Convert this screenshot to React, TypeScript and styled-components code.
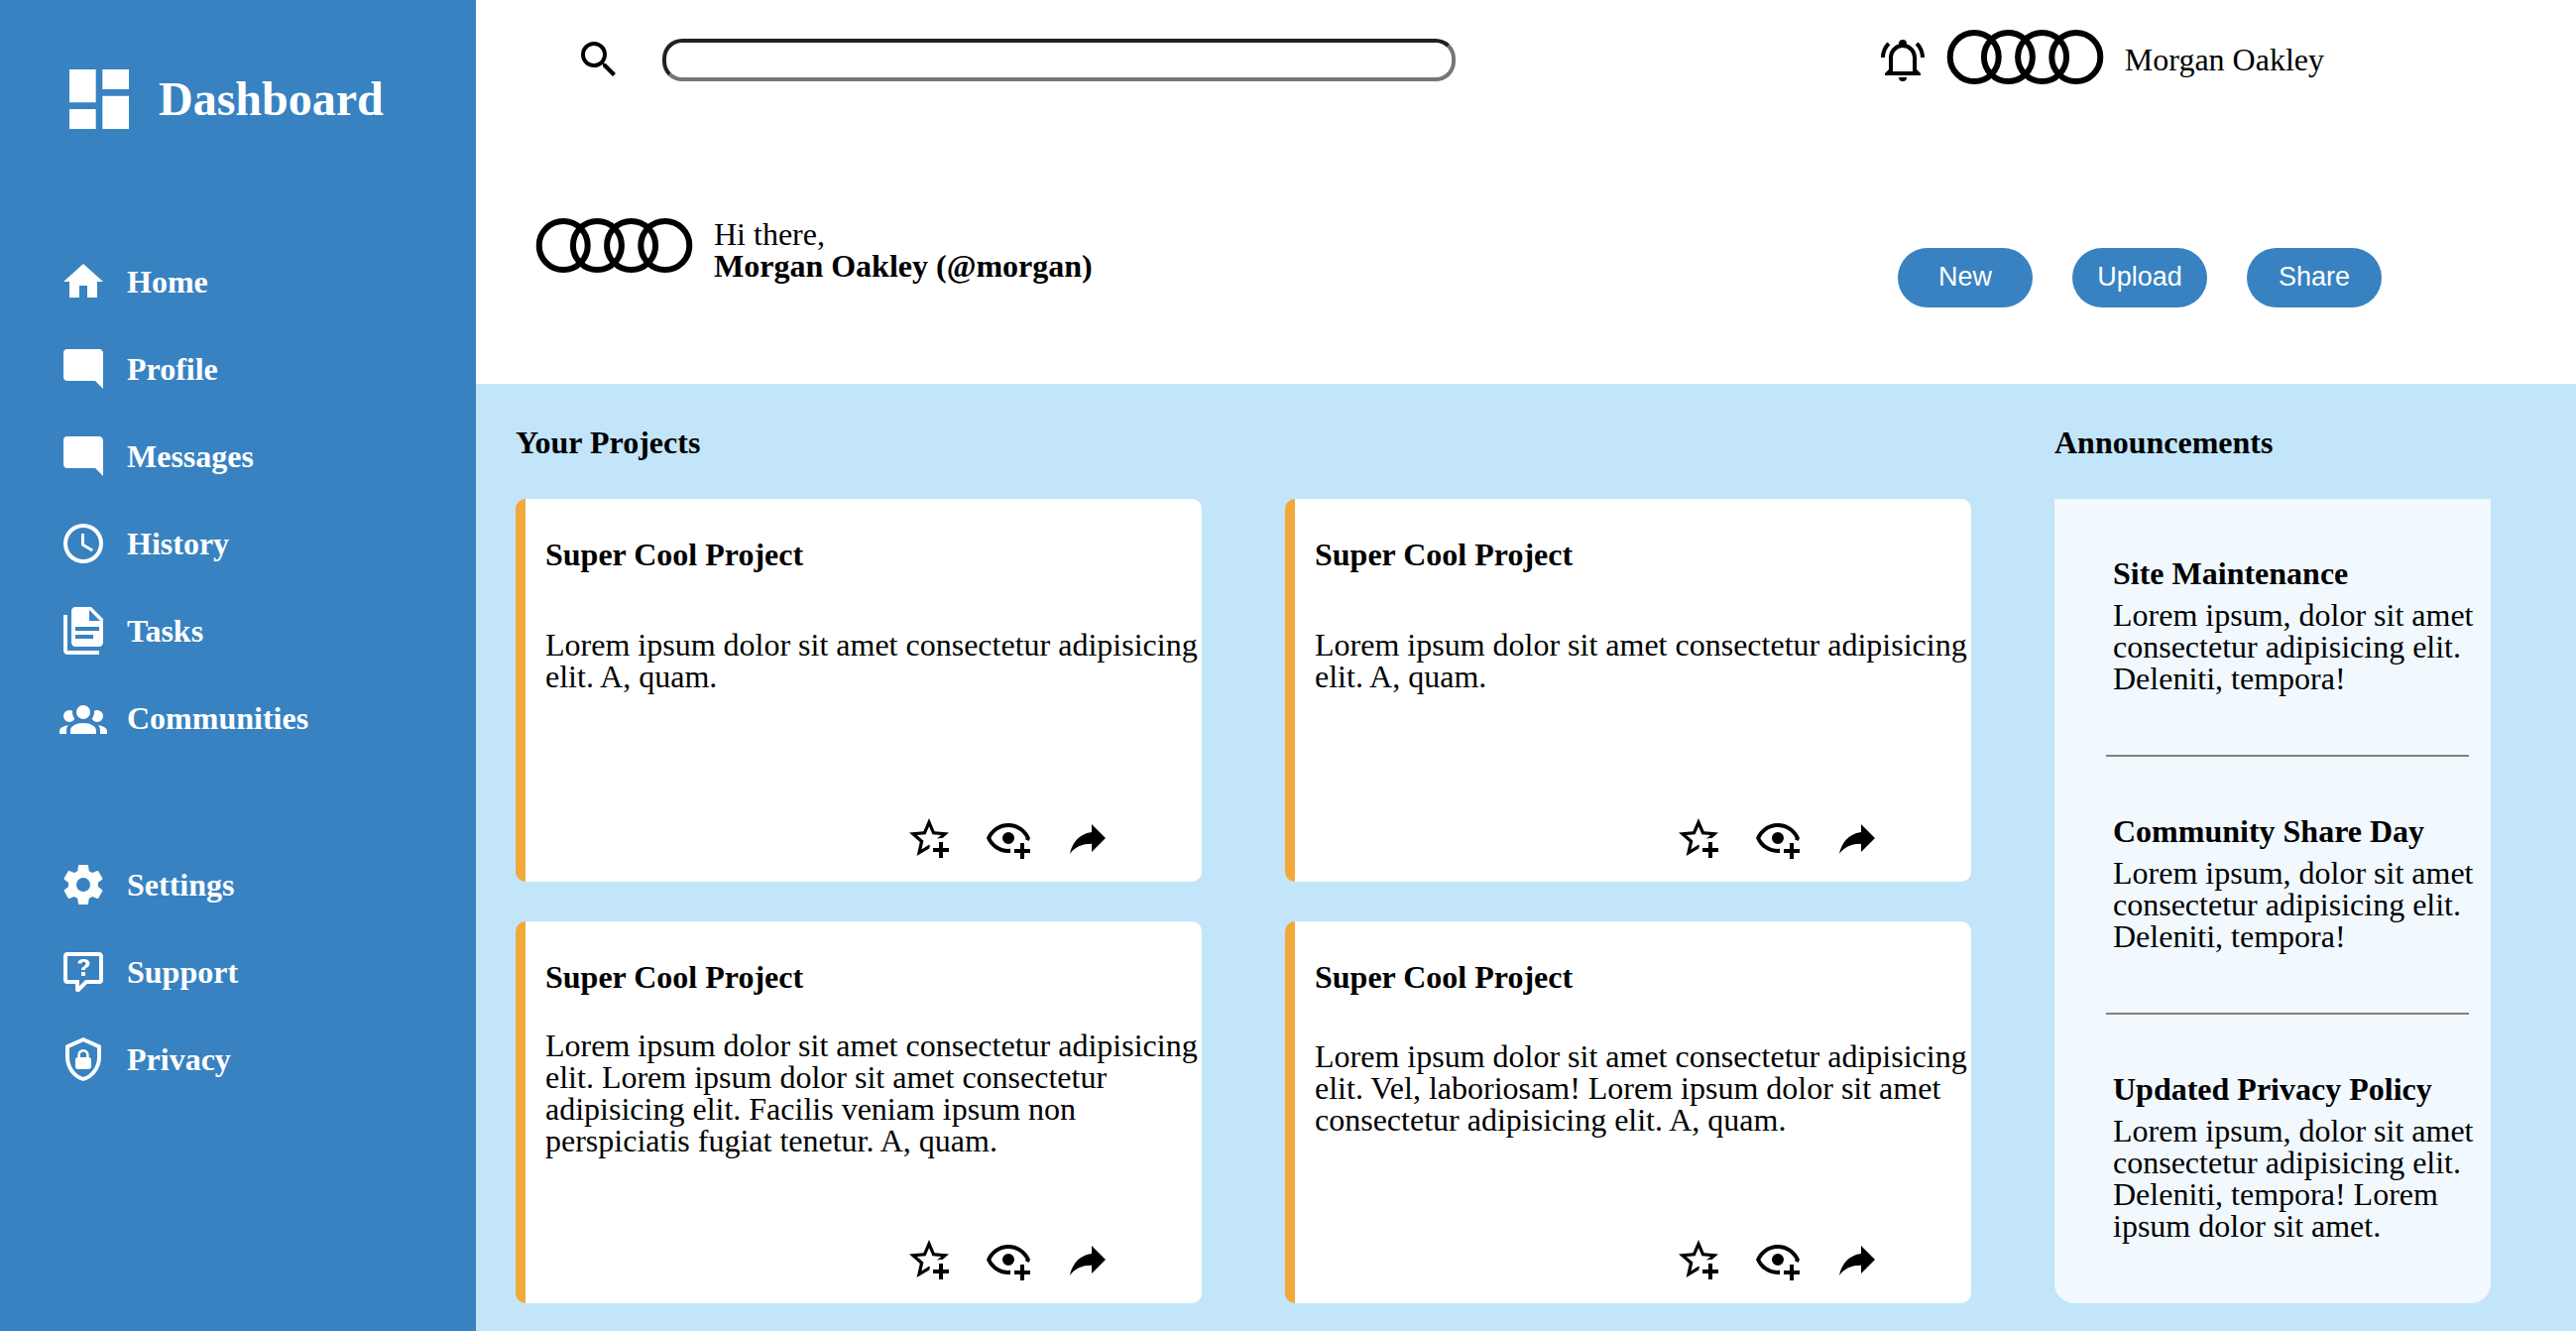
import React from "react";
import styled, { createGlobalStyle } from "styled-components";

const colors = {
  blue: "#3882c1",
  sky: "#c2e5f9",
  panel: "#f1f8fe",
  orange: "#f1a93b",
  rule: "#808080",
};

const GlobalStyle = createGlobalStyle`
  *, *::before, *::after { box-sizing: border-box; }
  body {
    margin: 0;
    background: #fff;
    color: #000;
    font-family: "Liberation Serif", "Times New Roman", serif;
    font-size: 32px;
    line-height: 32px;
  }
  h1, h2, h3, p, ul { margin: 0; padding: 0; }
  h1, h2, h3 { font-weight: bold; font-size: 32px; }
  ul { list-style: none; }
`;

const paths = {
  dashboard: "M13,3V9H21V3M13,21H21V11H13M3,21H11V15H3M3,13H11V3H3V13Z",
  home: "M10,20V14H14V20H19V12H22L12,3L2,12H5V20H10Z",
  comment:
    "M22,4C22,2.89 21.1,2 20,2H4A2,2 0 0,0 2,4V16A2,2 0 0,0 4,18H18L22,22V4Z",
  clock:
    "M12,20A8,8 0 0,0 20,12A8,8 0 0,0 12,4A8,8 0 0,0 4,12A8,8 0 0,0 12,20M12,2A10,10 0 0,1 22,12A10,10 0 0,1 12,22C6.47,22 2,17.5 2,12A10,10 0 0,1 12,2M12.5,7V12.25L17,14.92L16.25,16.15L11,13V7H12.5Z",
  tasks:
    "M16 0H8C6.9 0 6 .9 6 2V18C6 19.1 6.9 20 8 20H20C21.1 20 22 19.1 22 18V6L16 0M17 16H8V14H17V16M20 12H8V10H20V12M15 7V1.5L20.5 7H15M4 4V22H20V24H4C2.9 24 2 23.1 2 22V4H4Z",
  group:
    "M12,5.5A3.5,3.5 0 0,1 15.5,9A3.5,3.5 0 0,1 12,12.5A3.5,3.5 0 0,1 8.5,9A3.5,3.5 0 0,1 12,5.5M5,8C5.56,8 6.08,8.15 6.53,8.42C6.38,9.85 6.8,11.27 7.66,12.38C7.16,13.34 6.16,14 5,14A3,3 0 0,1 2,11A3,3 0 0,1 5,8M19,8A3,3 0 0,1 22,11A3,3 0 0,1 19,14C17.84,14 16.84,13.34 16.34,12.38C17.2,11.27 17.62,9.85 17.47,8.42C17.92,8.15 18.44,8 19,8M5.5,18.25C5.5,16.18 8.41,14.5 12,14.5C15.59,14.5 18.5,16.18 18.5,18.25V20H5.5V18.25M0,20V18.5C0,17.11 1.89,15.94 4.45,15.6C3.86,16.28 3.5,17.22 3.5,18.25V20H0M24,20H20.5V18.25C20.5,17.22 20.14,16.28 19.55,15.6C22.11,15.94 24,17.11 24,18.5V20Z",
  cog: "M12,15.5A3.5,3.5 0 0,1 8.5,12A3.5,3.5 0 0,1 12,8.5A3.5,3.5 0 0,1 15.5,12A3.5,3.5 0 0,1 12,15.5M19.43,12.97C19.47,12.65 19.5,12.33 19.5,12C19.5,11.67 19.47,11.34 19.43,11L21.54,9.37C21.73,9.22 21.78,8.95 21.66,8.73L19.66,5.27C19.54,5.05 19.27,4.96 19.05,5.05L16.56,6.05C16.04,5.66 15.5,5.32 14.87,5.07L14.5,2.42C14.46,2.18 14.25,2 14,2H10C9.75,2 9.54,2.18 9.5,2.42L9.13,5.07C8.5,5.32 7.96,5.66 7.44,6.05L4.95,5.05C4.73,4.96 4.46,5.05 4.34,5.27L2.34,8.73C2.21,8.95 2.27,9.22 2.46,9.37L4.57,11C4.53,11.34 4.5,11.67 4.5,12C4.5,12.33 4.53,12.65 4.57,12.97L2.46,14.63C2.27,14.78 2.21,15.05 2.34,15.27L4.34,18.73C4.46,18.95 4.73,19.03 4.95,18.95L7.44,17.94C7.96,18.34 8.5,18.68 9.13,18.93L9.5,21.58C9.54,21.82 9.75,22 10,22H14C14.25,22 14.46,21.82 14.5,21.58L14.87,18.93C15.5,18.67 16.04,18.34 16.56,17.94L19.05,18.95C19.27,19.03 19.54,18.95 19.66,18.73L21.66,15.27C21.78,15.05 21.73,14.78 21.54,14.63L19.43,12.97Z",
  question:
    "M4,2A2,2 0 0,0 2,4V16A2,2 0 0,0 4,18H8V21A1,1 0 0,0 9,22H9.5V22C9.75,22 10,21.9 10.2,21.71L13.9,18H20A2,2 0 0,0 22,16V4C22,2.89 21.1,2 20,2H4M4,4H20V16H13.08L10,19.08V16H4V4M12.19,5.5C11.3,5.5 10.59,5.68 10.05,6.04C9.5,6.4 9.22,7 9.27,7.69H11.24C11.24,7.41 11.34,7.2 11.5,7.06C11.7,6.92 11.92,6.85 12.19,6.85C12.5,6.85 12.77,6.93 12.95,7.11C13.13,7.28 13.22,7.5 13.22,7.8C13.22,8.08 13.14,8.33 13,8.54C12.83,8.76 12.62,8.94 12.36,9.08C11.84,9.4 11.5,9.68 11.29,9.92C11.1,10.16 11,10.5 11,11H13C13,10.72 13.05,10.5 13.14,10.32C13.23,10.15 13.4,10 13.66,9.85C14.12,9.64 14.5,9.36 14.79,9C15.08,8.63 15.23,8.24 15.23,7.8C15.23,7.1 14.96,6.54 14.42,6.12C13.88,5.71 13.13,5.5 12.19,5.5M11,12V14H13V12H11Z",
  shield:
    "M21,11C21,16.55 17.16,21.74 12,23C6.84,21.74 3,16.55 3,11V5L12,1L21,5V11M12,21C15.75,20 19,15.54 19,11.22V6.3L12,3.18L5,6.3V11.22C5,15.54 8.25,20 12,21M14.8,11V9.5C14.8,8.1 13.4,7 12,7C10.6,7 9.2,8.1 9.2,9.5V11C8.6,11 8,11.6 8,12.2V15.7C8,16.4 8.6,17 9.2,17H14.7C15.4,17 16,16.4 16,15.8V12.3C16,11.6 15.4,11 14.8,11M13.5,11H10.5V9.5C10.5,8.7 11.2,8.2 12,8.2C12.8,8.2 13.5,8.7 13.5,9.5V11Z",
  magnify:
    "M9.5,3A6.5,6.5 0 0,1 16,9.5C16,11.11 15.41,12.59 14.44,13.73L14.71,14H15.5L20.5,19L19,20.5L14,15.5V14.71L13.73,14.44C12.59,15.41 11.11,16 9.5,16A6.5,6.5 0 0,1 3,9.5A6.5,6.5 0 0,1 9.5,3M9.5,5C7,5 5,7 5,9.5C5,12 7,14 9.5,14C12,14 14,12 14,9.5C14,7 12,5 9.5,5Z",
  bell: "M10,21H14A2,2 0 0,1 12,23A2,2 0 0,1 10,21M21,19V20H3V19L5,17V11C5,7.9 7.03,5.17 10,4.29C10,4.19 10,4.1 10,4A2,2 0 0,1 12,2A2,2 0 0,1 14,4C14,4.1 14,4.19 14,4.29C16.97,5.17 19,7.9 19,11V17L21,19M17,11A5,5 0 0,0 12,6A5,5 0 0,0 7,11V18H17V11M19.75,3.19L18.33,4.61C20.04,6.3 21,8.6 21,11H23C23,8.07 21.84,5.25 19.75,3.19M1,11H3C3,8.6 3.96,6.3 5.67,4.61L4.25,3.19C2.16,5.25 1,8.07 1,11Z",
  star: "M5.8 21L7.4 14L2 9.2L9.2 8.6L12 2L14.8 8.6L22 9.2L18.8 12H18C17.3 12 16.6 12.1 15.9 12.4L18.1 10.5L13.7 10.1L12 6.1L10.3 10.1L5.9 10.5L9.2 13.4L8.2 17.7L12 15.4L12.5 15.7C12.3 16.2 12.1 16.8 12.1 17.3L5.8 21M17 14V17H14V19H17V22H19V19H22V17H19V14H17Z",
  eye: "M12,4.5C7,4.5 2.73,7.61 1,12C2.73,16.39 7,19.5 12,19.5C12.36,19.5 12.72,19.5 13.08,19.45C13.03,19.13 13,18.82 13,18.5C13,18.14 13.04,17.78 13.1,17.42C12.74,17.46 12.37,17.5 12,17.5C8.24,17.5 4.83,15.36 3.18,12C4.83,8.64 8.24,6.5 12,6.5C15.76,6.5 19.17,8.64 20.82,12C20.7,12.24 20.56,12.45 20.43,12.68C21.09,12.84 21.72,13.11 22.29,13.5C22.56,13 22.8,12.5 23,12C21.27,7.61 17,4.5 12,4.5M12,9A3,3 0 0,0 9,12A3,3 0 0,0 12,15A3,3 0 0,0 15,12A3,3 0 0,0 12,9M18,14.5V17.5H15V19.5H18V22.5H20V19.5H23V17.5H20V14.5H18Z",
  share: "M21,12L14,5V9C7,10 4,15 3,20C5.5,16.5 9,14.9 14,14.9V19L21,12Z",
};

type IconName = keyof typeof paths;

const IconSvg = styled.svg<{ $size: number }>`
  display: block;
  flex: none;
  width: ${(p) => p.$size}px;
  height: ${(p) => p.$size}px;
  fill: currentColor;
`;

function Icon({ name, size = 48 }: { name: IconName; size?: number }) {
  return (
    <IconSvg $size={size} viewBox="0 0 24 24" aria-hidden="true">
      <path d={paths[name]} />
    </IconSvg>
  );
}

const RingsSvg = styled.svg`
  display: block;
  flex: none;
  width: 160px;
  height: 60px;
`;

function Rings() {
  return (
    <RingsSvg viewBox="0 0 160 60" role="img" aria-label="Avatar">
      <g fill="none" stroke="#000" strokeWidth="6">
        {[28.2, 62.4, 96.6, 130.8].map((cx) => (
          <circle key={cx} cx={cx} cy="27.5" r="24.5" />
        ))}
      </g>
    </RingsSvg>
  );
}

const Layout = styled.div`
  display: grid;
  grid-template-columns: 480px minmax(0, 1fr);
  min-height: 100vh;
`;

const Sidebar = styled.aside`
  display: flex;
  flex-direction: column;
  padding: 60px;
  background: ${colors.blue};
  color: #fff;
`;

const Brand = styled.div`
  display: flex;
  align-items: center;
  gap: 20px;
  margin-bottom: 120px;
`;

const BrandName = styled.h1`
  font-size: 48px;
  line-height: 48px;
`;

const NavList = styled.ul`
  display: flex;
  flex-direction: column;
  gap: 40px;

  & + & {
    margin-top: 120px;
  }
`;

const NavLink = styled.a`
  display: flex;
  align-items: center;
  gap: 20px;
  color: inherit;
  font-weight: bold;
  text-decoration: none;
`;

const Content = styled.div`
  display: flex;
  flex-direction: column;
`;

const Header = styled.header`
  padding-bottom: 77px;
  background: #fff;
`;

const TopBar = styled.div`
  display: flex;
  align-items: center;
  justify-content: space-between;
  height: 120px;
  padding: 0 254px 0 100px;
`;

const Search = styled.form`
  display: flex;
  align-items: center;
  gap: 40px;
`;

const SearchInput = styled.input`
  width: 800px;
  height: 43px;
  padding: 0 16px;
  border: 4px solid;
  border-color: #212121 #767676 #767676 #212121;
  border-radius: 20px;
  background: #fff;
  font: 27px "Liberation Sans", Arial, sans-serif;
`;

const User = styled.div`
  display: flex;
  align-items: center;
  gap: 20px;
`;

const IconButton = styled.button`
  padding: 0;
  border: 0;
  background: none;
  color: inherit;
  cursor: pointer;
`;

const Welcome = styled.div`
  display: flex;
  align-items: flex-start;
  justify-content: space-between;
  padding: 100px 196px 0 60px;
`;

const Greeting = styled.div`
  display: flex;
  align-items: flex-start;
  gap: 20px;
`;

const Handle = styled.p`
  font-weight: bold;
`;

const Actions = styled.div`
  display: flex;
  gap: 40px;
  padding-top: 30px;
`;

const ActionButton = styled.button`
  width: 136px;
  height: 60px;
  padding: 0 0 2px;
  border: 0;
  border-radius: 30px;
  background: ${colors.blue};
  color: #fff;
  font: 27px "Liberation Sans", Arial, sans-serif;
  cursor: pointer;
`;

const Main = styled.main`
  display: flex;
  flex: 1;
  gap: 84px;
  padding: 43px 86px 28px 40px;
  background: ${colors.sky};
`;

const Projects = styled.section`
  display: flex;
  flex: 1;
  flex-direction: column;
  gap: 41px;
  min-width: 0;
`;

const Announcements = styled.section`
  display: flex;
  flex: none;
  flex-direction: column;
  gap: 41px;
  width: 440px;
`;

const CardGrid = styled.div`
  display: grid;
  flex: 1;
  grid-template-columns: repeat(2, minmax(0, 1fr));
  grid-auto-rows: 1fr;
  gap: 40px 84px;
`;

const Card = styled.article`
  display: grid;
  grid-template-rows: auto auto auto;
  padding: 40px 0 0 20px;
  border-left: 10px solid ${colors.orange};
  border-radius: 10px;
  background: #fff;
`;

const CardActions = styled.div`
  display: flex;
  align-items: flex-end;
  justify-content: flex-end;
  gap: 32px;
  padding: 4px 91px 20px 0;
`;

const Panel = styled.div`
  flex: 1;
  border-radius: 0 0 20px 20px;
  background: ${colors.panel};
`;

const Notice = styled.article`
  display: flex;
  flex-direction: column;
  gap: 10px;
  padding: 59px 0 61px 59px;
`;

const Divider = styled.hr`
  height: 2px;
  margin: 0 22px 0 52px;
  border: 0;
  background: ${colors.rule};
`;

const primaryNav: { icon: IconName; label: string }[] = [
  { icon: "home", label: "Home" },
  { icon: "comment", label: "Profile" },
  { icon: "comment", label: "Messages" },
  { icon: "clock", label: "History" },
  { icon: "tasks", label: "Tasks" },
  { icon: "group", label: "Communities" },
];

const secondaryNav: { icon: IconName; label: string }[] = [
  { icon: "cog", label: "Settings" },
  { icon: "question", label: "Support" },
  { icon: "shield", label: "Privacy" },
];

const projects = [
  "Lorem ipsum dolor sit amet consectetur adipisicing elit. A, quam.",
  "Lorem ipsum dolor sit amet consectetur adipisicing elit. A, quam.",
  "Lorem ipsum dolor sit amet consectetur adipisicing elit. Lorem ipsum dolor sit amet consectetur adipisicing elit. Facilis veniam ipsum non perspiciatis fugiat tenetur. A, quam.",
  "Lorem ipsum dolor sit amet consectetur adipisicing elit. Vel, laboriosam! Lorem ipsum dolor sit amet consectetur adipisicing elit. A, quam.",
];

const notices = [
  {
    title: "Site Maintenance",
    text: "Lorem ipsum, dolor sit amet consectetur adipisicing elit. Deleniti, tempora!",
  },
  {
    title: "Community Share Day",
    text: "Lorem ipsum, dolor sit amet consectetur adipisicing elit. Deleniti, tempora!",
  },
  {
    title: "Updated Privacy Policy",
    text: "Lorem ipsum, dolor sit amet consectetur adipisicing elit. Deleniti, tempora! Lorem ipsum dolor sit amet.",
  },
];

function Nav({ items }: { items: typeof primaryNav }) {
  return (
    <NavList>
      {items.map(({ icon, label }) => (
        <li key={label}>
          <NavLink href="#">
            <Icon name={icon} />
            {label}
          </NavLink>
        </li>
      ))}
    </NavList>
  );
}

export default function App() {
  return (
    <>
      <GlobalStyle />
      <Layout>
        <Sidebar>
          <Brand>
            <Icon name="dashboard" size={80} />
            <BrandName>Dashboard</BrandName>
          </Brand>
          <nav>
            <Nav items={primaryNav} />
            <Nav items={secondaryNav} />
          </nav>
        </Sidebar>
        <Content>
          <Header>
            <TopBar>
              <Search role="search">
                <label htmlFor="search" aria-label="Search">
                  <Icon name="magnify" />
                </label>
                <SearchInput id="search" type="text" />
              </Search>
              <User>
                <IconButton type="button" aria-label="Notifications">
                  <Icon name="bell" />
                </IconButton>
                <Rings />
                <span>Morgan Oakley</span>
              </User>
            </TopBar>
            <Welcome>
              <Greeting>
                <Rings />
                <div>
                  <p>Hi there,</p>
                  <Handle>Morgan Oakley (@morgan)</Handle>
                </div>
              </Greeting>
              <Actions>
                <ActionButton type="button">New</ActionButton>
                <ActionButton type="button">Upload</ActionButton>
                <ActionButton type="button">Share</ActionButton>
              </Actions>
            </Welcome>
          </Header>
          <Main>
            <Projects>
              <h2>Your Projects</h2>
              <CardGrid>
                {projects.map((text, i) => (
                  <Card key={i}>
                    <h3>Super Cool Project</h3>
                    <p>{text}</p>
                    <CardActions>
                      <IconButton type="button" aria-label="Star">
                        <Icon name="star" />
                      </IconButton>
                      <IconButton type="button" aria-label="Watch">
                        <Icon name="eye" />
                      </IconButton>
                      <IconButton type="button" aria-label="Share project">
                        <Icon name="share" />
                      </IconButton>
                    </CardActions>
                  </Card>
                ))}
              </CardGrid>
            </Projects>
            <Announcements>
              <h2>Announcements</h2>
              <Panel>
                {notices.map((n, i) => (
                  <React.Fragment key={n.title}>
                    {i > 0 && <Divider />}
                    <Notice>
                      <h3>{n.title}</h3>
                      <p>{n.text}</p>
                    </Notice>
                  </React.Fragment>
                ))}
              </Panel>
            </Announcements>
          </Main>
        </Content>
      </Layout>
    </>
  );
}
